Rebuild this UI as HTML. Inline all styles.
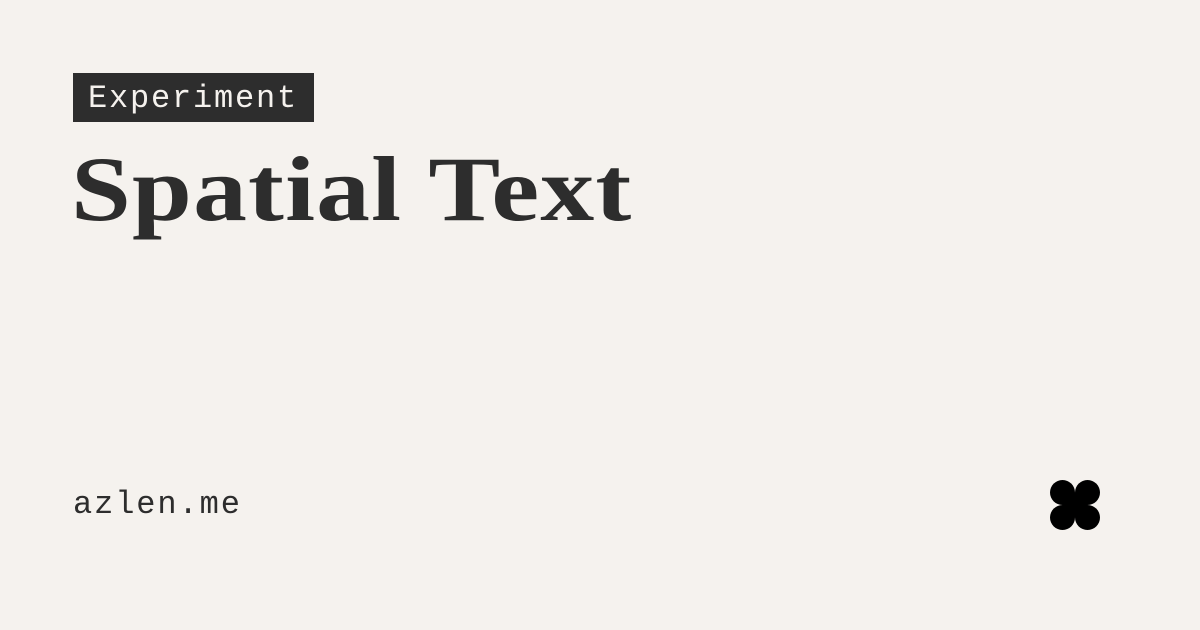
<!DOCTYPE html>
<html><head><style>
html,body{margin:0;padding:0}
body{width:1200px;height:630px;background:#f5f2ee;position:relative;overflow:hidden;color:#2d2d2d}
.badge{position:absolute;left:73px;top:73px;width:241px;height:49px;background:#2d2d2d;color:#f5f2ee;font:32px "Liberation Mono",monospace;letter-spacing:1.8px;line-height:51px;box-sizing:border-box;padding-left:15px}
.title{position:absolute;left:71px;top:134px;font:bold 92px "Liberation Serif",serif;line-height:110px;letter-spacing:1px;white-space:nowrap;transform:scaleX(1.17);transform-origin:0 0}
.site{position:absolute;left:73px;top:483px;font:32px "Liberation Mono",monospace;letter-spacing:1.9px;line-height:44px}
.logo{position:absolute;left:1050px;top:480px;width:50px;height:50px}
.logo div{position:absolute;width:25px;height:25px;background:#000}
</style></head><body>
<div class="badge">Experiment</div>
<div class="title">Spatial Text</div>
<div class="site">azlen.me</div>
<div class="logo">
<div style="left:0;top:0;border-radius:12.5px 12.5px 0 12.5px"></div>
<div style="left:25px;top:0;border-radius:12.5px 12.5px 12.5px 0"></div>
<div style="left:0;top:25px;border-radius:12.5px 0 12.5px 12.5px"></div>
<div style="left:25px;top:25px;border-radius:0 12.5px 12.5px 12.5px"></div>
</div>
</body></html>
